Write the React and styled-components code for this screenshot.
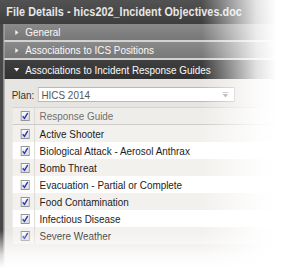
import React from "react";
import styled, { createGlobalStyle } from "styled-components";

const Global = createGlobalStyle`
  html, body { margin: 0; padding: 0; background: #fff; }
  body { width: 288px; height: 271px; overflow: hidden; font-family: "Liberation Sans", Arial, sans-serif; }
`;

const Stage = styled.div`
  position: relative;
  width: 288px;
  height: 271px;
  overflow: hidden;
  background: #fff;
`;

const Window = styled.div`
  width: 330px;
  height: 271px;
  transform: scaleX(0.9);
  transform-origin: 0 0;
  background: #474747;
  display: flex;
  flex-direction: column;
  padding-left: 4px;
  box-sizing: border-box;
`;

const TitleBar = styled.div`
  height: 24px;
  flex: none;
  margin-left: -4px;
  padding-left: 7px;
  display: flex;
  align-items: center;
  background: linear-gradient(#525252, #3e3e3e);
  color: #e6e6e6;
  font-weight: bold;
  font-size: 12px;
  letter-spacing: 0.05px;
`;

const Body = styled.div`
  flex: 1;
  display: flex;
  flex-direction: column;
  border-left: 1px solid #8a8a8a;
  background: #e7e5e1;
`;

const SectionHeader = styled.div`
  height: ${(p) => (p.$open ? "19px" : "18px")};
  flex: none;
  display: flex;
  align-items: center;
  gap: 6px;
  padding-left: 10px;
  box-sizing: border-box;
  font-size: 11px;
  color: #fafafa;
  background: ${(p) =>
    p.$open
      ? "linear-gradient(#3f3f3f, #323232)"
      : "linear-gradient(#8a8a8a, #777777)"};
  border-bottom: ${(p) => (p.$open ? "none" : "2px solid #d2d2d2")};
`;

const Arrow = styled.svg`
  width: 7px;
  height: 7px;
  flex: none;
`;

const Content = styled.div`
  flex: 1;
  padding: 8px 0 0 8px;
  display: flex;
  flex-direction: column;
`;

const PlanRow = styled.div`
  display: flex;
  align-items: center;
  gap: 4px;
  height: 15px;
  font-size: 11px;
  color: #333;
`;

const Select = styled.div`
  width: 219px;
  height: 15px;
  box-sizing: border-box;
  border: 1px solid #b9b9b9;
  background: #fff;
  display: flex;
  align-items: center;
  justify-content: space-between;
  padding: 0 6px 0 3px;
  color: #555;
  font-size: 11px;
`;

const Table = styled.div`
  margin-top: 5px;
  margin-left: 1px;
  border-top: 1px solid #d6d4d0;
  display: flex;
  flex-direction: column;
`;

const Row = styled.div`
  display: flex;
  height: 17px;
  box-sizing: border-box;
  background: ${(p) => (p.$head ? "#efedea" : p.$alt ? "#f3f1ee" : "#ffffff")};
  border-bottom: ${(p) => (p.$head ? "1px solid #cdcbc7" : "none")};
  font-size: 11px;
  color: ${(p) => (p.$head ? "#6f6f6f" : "#1c1c1c")};
`;

const CheckCell = styled.div`
  width: 25px;
  flex: none;
  box-sizing: border-box;
  border-right: 1px solid #d9d7d3;
  display: flex;
  align-items: center;
  padding-left: 9px;
`;

const TextCell = styled.div`
  flex: 1;
  display: flex;
  align-items: center;
  padding-left: 5px;
  white-space: nowrap;
`;

const Box = styled.div`
  width: 10px;
  height: 10px;
  box-sizing: border-box;
  border: 1px solid #949494;
  background: linear-gradient(#ffffff, #dadada);
  display: flex;
  align-items: center;
  justify-content: center;
`;

const Fade = styled.div`
  position: absolute;
  inset: 0;
  pointer-events: none;
  background:
    linear-gradient(to right, rgba(255,255,255,0) 70%, rgba(255,255,255,0.85) 89%, #fff 96%),
    linear-gradient(to bottom, rgba(255,255,255,0) 85%, rgba(255,255,255,0.8) 94%, #fff 99%);
`;

const Check = () => (
  <Box>
    <svg width="8" height="8" viewBox="0 0 8 8">
      <path d="M1.2 4.2 L3.2 6.4 L6.8 1" fill="none" stroke="#2436b8" strokeWidth="1.5" />
    </svg>
  </Box>
);

const RightArrow = () => (
  <Arrow viewBox="0 0 7 7">
    <path d="M2 1 L5.5 3.5 L2 6 Z" fill="#f2f2f2" />
  </Arrow>
);

const DownArrow = () => (
  <Arrow viewBox="0 0 7 7">
    <path d="M0.5 2 L6.5 2 L3.5 5.5 Z" fill="#f2f2f2" />
  </Arrow>
);

const guides = [
  "Active Shooter",
  "Biological Attack - Aerosol Anthrax",
  "Bomb Threat",
  "Evacuation - Partial or Complete",
  "Food Contamination",
  "Infectious Disease",
  "Severe Weather",
];

export default function App() {
  return (
    <Stage>
      <Global />
      <Window>
        <TitleBar>File Details - hics202_Incident Objectives.doc</TitleBar>
        <Body>
          <SectionHeader>
            <RightArrow />
            General
          </SectionHeader>
          <SectionHeader>
            <RightArrow />
            Associations to ICS Positions
          </SectionHeader>
          <SectionHeader $open>
            <DownArrow />
            Associations to Incident Response Guides
          </SectionHeader>
          <Content>
            <PlanRow>
              Plan:
              <Select>
                HICS 2014
                <svg width="7" height="6" viewBox="0 0 7 6">
                  <rect x="0.5" y="0" width="6" height="1" fill="#b0b0b0" />
                  <path d="M0.5 2 L6.5 2 L3.5 5.5 Z" fill="#9a9a9a" />
                </svg>
              </Select>
            </PlanRow>
            <Table>
              <Row $head>
                <CheckCell>
                  <Check />
                </CheckCell>
                <TextCell>Response Guide</TextCell>
              </Row>
              {guides.map((g, i) => (
                <Row key={g} $alt={i % 2 === 0}>
                  <CheckCell>
                    <Check />
                  </CheckCell>
                  <TextCell>{g}</TextCell>
                </Row>
              ))}
            </Table>
          </Content>
        </Body>
      </Window>
      <Fade />
    </Stage>
  );
}
